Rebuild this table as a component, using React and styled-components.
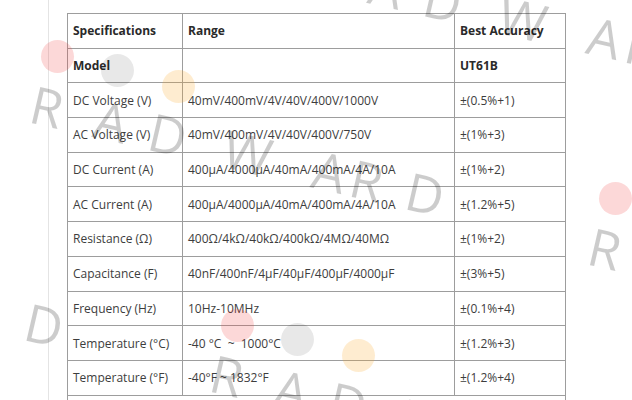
import React from "react";
import styled, { createGlobalStyle } from "styled-components";

const rows = [
  ["DC Voltage (V)", "40mV/400mV/4V/40V/400V/1000V", "±(0.5%+1)"],
  ["AC Voltage (V)", "40mV/400mV/4V/40V/400V/750V", "±(1%+3)"],
  ["DC Current (A)", "400μA/4000μA/40mA/400mA/4A/10A", "±(1%+2)"],
  ["AC Current (A)", "400μA/4000μA/40mA/400mA/4A/10A", "±(1.2%+5)"],
  ["Resistance (Ω)", "400Ω/4kΩ/40kΩ/400kΩ/4MΩ/40MΩ", "±(1%+2)"],
  ["Capacitance (F)", "40nF/400nF/4μF/40μF/400μF/4000μF", "±(3%+5)"],
  ["Frequency (Hz)", "10Hz-10MHz", "±(0.1%+4)"],
  ["Temperature (°C)", "-40 °C  ~  1000°C", "±(1.2%+3)"],
  ["Temperature (°F)", "-40°F ~ 1832°F", "±(1.2%+4)"],
];

// watermark units, origin = centre of the pink dot
const marks = [
  { x: 57, y: 56 },
  { x: 237, y: 325 },
  { x: 615, y: 198 },
  { x: 332, y: -78 },
  { x: -324, y: 187 },
];

// letter centres along the watermark line, measured from the first R
const letters = [
  ["R", 0],
  ["A", 66],
  ["D", 124],
  ["W", 206],
  ["A", 290],
  ["R", 328],
  ["D", 388],
];

const App = () => (
  <>
    <Global />
    <Page>
      <Sheet>
        <Table>
          <colgroup>
            <col style={{ width: 115 }} />
            <col style={{ width: 272 }} />
            <col style={{ width: 111 }} />
          </colgroup>
          <tbody>
            <tr>
              <Cell $bold>Specifications</Cell>
              <Cell $bold>Range</Cell>
              <Cell $bold>Best Accuracy</Cell>
            </tr>
            <tr>
              <Cell $bold>Model</Cell>
              <Cell />
              <Cell $bold>UT61B</Cell>
            </tr>
            {rows.map((r) => (
              <tr key={r[0]}>
                <Cell>{r[0]}</Cell>
                <Cell>{r[1]}</Cell>
                <Cell>{r[2]}</Cell>
              </tr>
            ))}
            <tr>
              <Cell colSpan={3} />
            </tr>
          </tbody>
        </Table>
      </Sheet>
      <Overlay>
        {marks.map((m, i) => (
          <Mark key={i} style={{ left: m.x, top: m.y }}>
            <Dot $c="rgba(240,60,60,0.2)" $x={0} $y={0} />
            <Dot $c="rgba(0,0,0,0.09)" $x={60} $y={14} />
            <Dot $c="rgba(250,170,40,0.22)" $x={121} $y={30} />
            <Word>
              {letters.map(([ch, d], j) => (
                <Letter key={j} $d={d}>
                  {ch}
                </Letter>
              ))}
            </Word>
          </Mark>
        ))}
      </Overlay>
    </Page>
  </>
);

export default App;

const Global = createGlobalStyle`
  html, body {
    margin: 0;
    background: #fff;
  }
`;

const Page = styled.div`
  position: relative;
  width: 632px;
  height: 400px;
  overflow: hidden;
  background: #fff;
`;

const Sheet = styled.div`
  margin-left: 48px;
  height: 100%;
  border-left: 1px solid #e4e4e4;
  padding: 13px 0 0 18px;
`;

const Table = styled.table`
  width: 498px;
  border-collapse: collapse;
  table-layout: fixed;
  border: 1px solid #808080;
  font-family: "Open Sans", "Noto Sans", sans-serif;
  font-size: 12px;
  color: #3a3a3a;
`;

const Cell = styled.td`
  height: 34.7px;
  box-sizing: border-box;
  padding: 0 5px;
  border: 1px solid #9d9d9d;
  font-weight: ${(p) => (p.$bold ? 700 : 400)};
  color: ${(p) => (p.$bold ? "#2a2a2a" : "#3d3d3d")};
  white-space: pre;
  vertical-align: middle;
`;

const Overlay = styled.div`
  position: absolute;
  inset: 0;
  pointer-events: none;
`;

const Mark = styled.div`
  position: absolute;
  width: 0;
  height: 0;
`;

const Dot = styled.span`
  position: absolute;
  left: ${(p) => p.$x - 16}px;
  top: ${(p) => p.$y - 16}px;
  width: 33px;
  height: 33px;
  border-radius: 50%;
  background: ${(p) => p.$c};
`;

const Word = styled.div`
  position: absolute;
  left: -10px;
  top: 51px;
  width: 0;
  height: 0;
  transform: rotate(13deg);
  font-family: "Open Sans", "Noto Sans", sans-serif;
  font-size: 52px;
  line-height: 52px;
  color: rgba(0, 0, 0, 0.2);
`;

const Letter = styled.span`
  position: absolute;
  left: ${(p) => p.$d - 30}px;
  top: -27px;
  width: 60px;
  text-align: center;
`;
